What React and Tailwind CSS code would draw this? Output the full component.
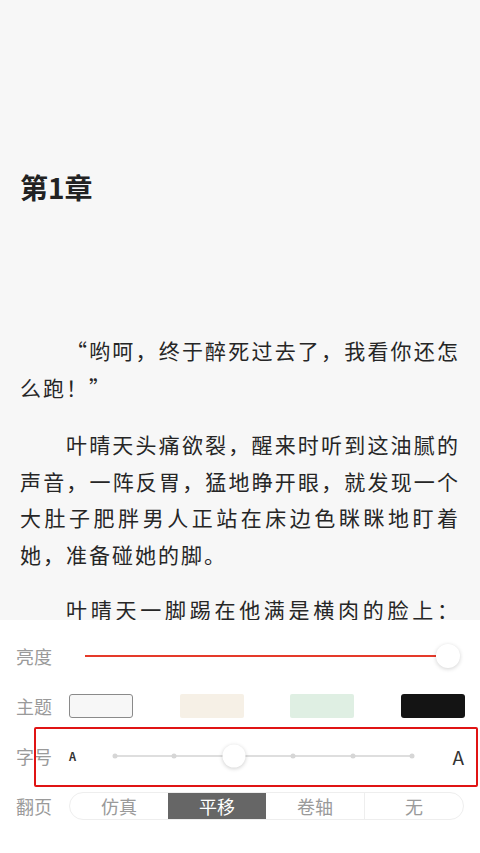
import React from "react";

const font = { fontFamily: '"Noto Sans CJK SC", "Noto Sans", sans-serif' };

function Label({ children }) {
  return (
    <div className="w-[69px] pl-4 text-[18px] leading-none text-[#9a9a9a] shrink-0">
      {children}
    </div>
  );
}

export default function App() {
  const modes = ["仿真", "平移", "卷轴", "无"];
  return (
    <div
      className="w-[480px] h-[853px] flex flex-col overflow-hidden bg-[#f7f7f7]"
      style={font}
    >
      <div className="flex-1 overflow-hidden px-5 text-[#262626]">
        <h1 className="mt-[167px] text-[28px] leading-[40px] font-bold text-[#222]">
          第1章
        </h1>
        <div className="mt-[125px] text-[21px] leading-[36.5px] tracking-[2px] text-justify">
          <p className="indent-[46px] mb-[21px]">
            “哟呵，终于醉死过去了，我看你还怎么跑！”
          </p>
          <p className="indent-[46px] mb-[19px]">
            叶晴天头痛欲裂，醒来时听到这油腻的声音，一阵反胃，猛地睁开眼，就发现一个大肚子肥胖男人正站在床边色眯眯地盯着她，准备碰她的脚。
          </p>
          <p className="indent-[46px]">
            叶晴天一脚踢在他满是横肉的脸上：<wbr />“你……”
          </p>
        </div>
      </div>

      <div className="relative h-[233px] shrink-0 bg-white pt-[11px]">
        {/* 亮度 */}
        <div className="h-[50px] flex items-center">
          <Label>亮度</Label>
          <div className="flex-1 flex items-center pl-4 pr-5">
            <div className="flex-1 h-[1.5px] bg-[#e53a2a]" />
            <div className="w-6 h-6 rounded-full bg-white shadow-[0_1px_4px_rgba(0,0,0,0.18)]" />
          </div>
        </div>

        {/* 主题 */}
        <div className="h-[50px] flex items-center">
          <Label>主题</Label>
          <div className="flex-1 flex items-center justify-between pr-[15px]">
            <div className="w-16 h-6 rounded-[3px] border border-[#8a8a8a] bg-[#f7f7f7]" />
            <div className="w-16 h-6 rounded-[2px] bg-[#f6f0e6]" />
            <div className="w-16 h-6 rounded-[2px] bg-[#dfefe3]" />
            <div className="w-16 h-6 rounded-[3px] bg-[#141414]" />
          </div>
        </div>

        {/* 字号 */}
        <div className="h-[50px] flex items-center">
          <Label>字号</Label>
          <div className="flex-1 flex items-center pr-4">
            <div className="w-[46px] text-[11px] font-semibold text-[#333]">A</div>
            <div className="relative w-[297px] h-[2px] bg-[#dedede]">
              <div className="absolute left-0 top-1/2 -translate-x-1/2 -translate-y-1/2 w-[5px] h-[5px] rounded-full bg-[#d6d6d6]" />
              <div className="absolute left-[20%] top-1/2 -translate-x-1/2 -translate-y-1/2 w-[5px] h-[5px] rounded-full bg-[#d6d6d6]" />
              <div className="absolute left-[60%] top-1/2 -translate-x-1/2 -translate-y-1/2 w-[5px] h-[5px] rounded-full bg-[#d6d6d6]" />
              <div className="absolute left-[80%] top-1/2 -translate-x-1/2 -translate-y-1/2 w-[5px] h-[5px] rounded-full bg-[#d6d6d6]" />
              <div className="absolute left-full top-1/2 -translate-x-1/2 -translate-y-1/2 w-[5px] h-[5px] rounded-full bg-[#d6d6d6]" />
              <div className="absolute left-[40%] top-1/2 -translate-x-1/2 -translate-y-1/2 w-[23px] h-[23px] rounded-full bg-white shadow-[0_1px_4px_rgba(0,0,0,0.2)]" />
            </div>
            <div className="flex-1 text-right text-[19px] leading-none text-[#333]">A</div>
          </div>
        </div>

        {/* 翻页 */}
        <div className="h-[50px] flex items-center">
          <Label>翻页</Label>
          <div className="w-[395px] h-[28px] flex rounded-full border border-[#eeeeee] overflow-hidden">
            {modes.map((m, i) => (
              <div
                key={m}
                className={
                  "flex-1 flex items-center justify-center text-[18px] leading-none " +
                  (i === 1
                    ? "bg-[#666666] text-white"
                    : "text-[#9a9a9a]") +
                  (i === 3 ? " border-l border-[#eeeeee]" : "")
                }
              >
                {m}
              </div>
            ))}
          </div>
        </div>

        {/* annotation box */}
        <div className="absolute left-[34px] right-[2px] top-[107px] h-[60px] border-2 border-[#e01414] rounded-[2px] pointer-events-none" />
      </div>
    </div>
  );
}
